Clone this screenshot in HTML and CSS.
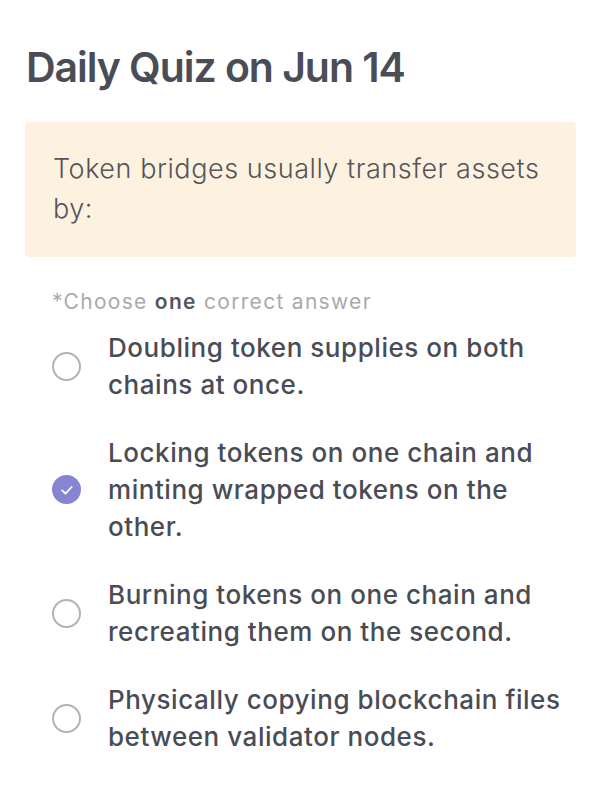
FILE: index.html
```html
<!DOCTYPE html>
<html lang="en">
<head>
	<meta charset="utf-8" />
	<meta name="viewport" content="width=device-width" />
	<title>Daily Quiz</title>
	<link rel="stylesheet" href="styles.css">
</head>
<body>
	<div class="quiz">
		<h1 class="quiz-title">Daily Quiz on Jun 14</h1>

		<div class="question">
			<p>Token bridges usually transfer assets by:</p>
		</div>

		<p class="hint">*Choose <b>one</b> correct answer</p>

		<ul class="answers">
			<li class="answer">
				<span class="radio"></span>
				<span class="answer-text">Doubling token supplies on both chains at once.</span>
			</li>
			<li class="answer checked">
				<span class="radio">
					<svg viewBox="0 0 28 28" width="28" height="28">
						<path d="M9.2 14.4l3.3 3.3 6.2-6.7" fill="none" stroke="#fff" stroke-width="1.8" stroke-linecap="round" stroke-linejoin="round" />
					</svg>
				</span>
				<span class="answer-text">Locking tokens on one chain and minting wrapped tokens on the other.</span>
			</li>
			<li class="answer">
				<span class="radio"></span>
				<span class="answer-text">Burning tokens on one chain and recreating them on the second.</span>
			</li>
			<li class="answer">
				<span class="radio"></span>
				<span class="answer-text">Physically copying blockchain files between validator nodes.</span>
			</li>
		</ul>
	</div>
</body>
</html>
```

FILE: styles.css
```css
body {
	margin: 0;
	padding: 0;
	background-color: #ffffff;
	font-family: Inter, "Noto Sans", sans-serif;
	color: #4a4c55;
}

.quiz {
	padding: 44px 24px 0 25px;
}

.quiz-title {
	margin: 0 0 0 1px;
	font-size: 41px;
	line-height: 46px;
	font-weight: 600;
	color: #4b4d56;
	letter-spacing: -1.05px;
}

.question {
	margin-top: 32px;
	background-color: #fdf2e0;
	border-radius: 4px;
	padding: 27px 28px 28px 28px;
}

.question p {
	margin: 0;
	font-size: 27px;
	line-height: 40px;
	font-weight: 300;
	letter-spacing: 0.55px;
	color: #55555a;
}

.hint {
	margin: 31px 0 0 27px;
	font-size: 21px;
	line-height: 28px;
	letter-spacing: 1.3px;
	color: #aaaaaa;
}

.hint b {
	font-weight: 600;
	color: #55565c;
}

.answers {
	list-style: none;
	margin: 13px 0 0 0;
	padding: 0;
	display: flex;
	flex-direction: column;
	gap: 31px;
}

.answer {
	display: flex;
	align-items: center;
	gap: 27px;
	padding-left: 27px;
}

.radio {
	flex: none;
	box-sizing: border-box;
	width: 29px;
	height: 29px;
	border: 2px solid #b3b3b3;
	border-radius: 50%;
	display: flex;
	align-items: center;
	justify-content: center;
}

.answer.checked .radio {
	border: none;
	background-color: #8585d2;
}

.answer-text {
	font-size: 26px;
	line-height: 37px;
	font-weight: 500;
	letter-spacing: 0.55px;
	color: #4a4c55;
}
```
